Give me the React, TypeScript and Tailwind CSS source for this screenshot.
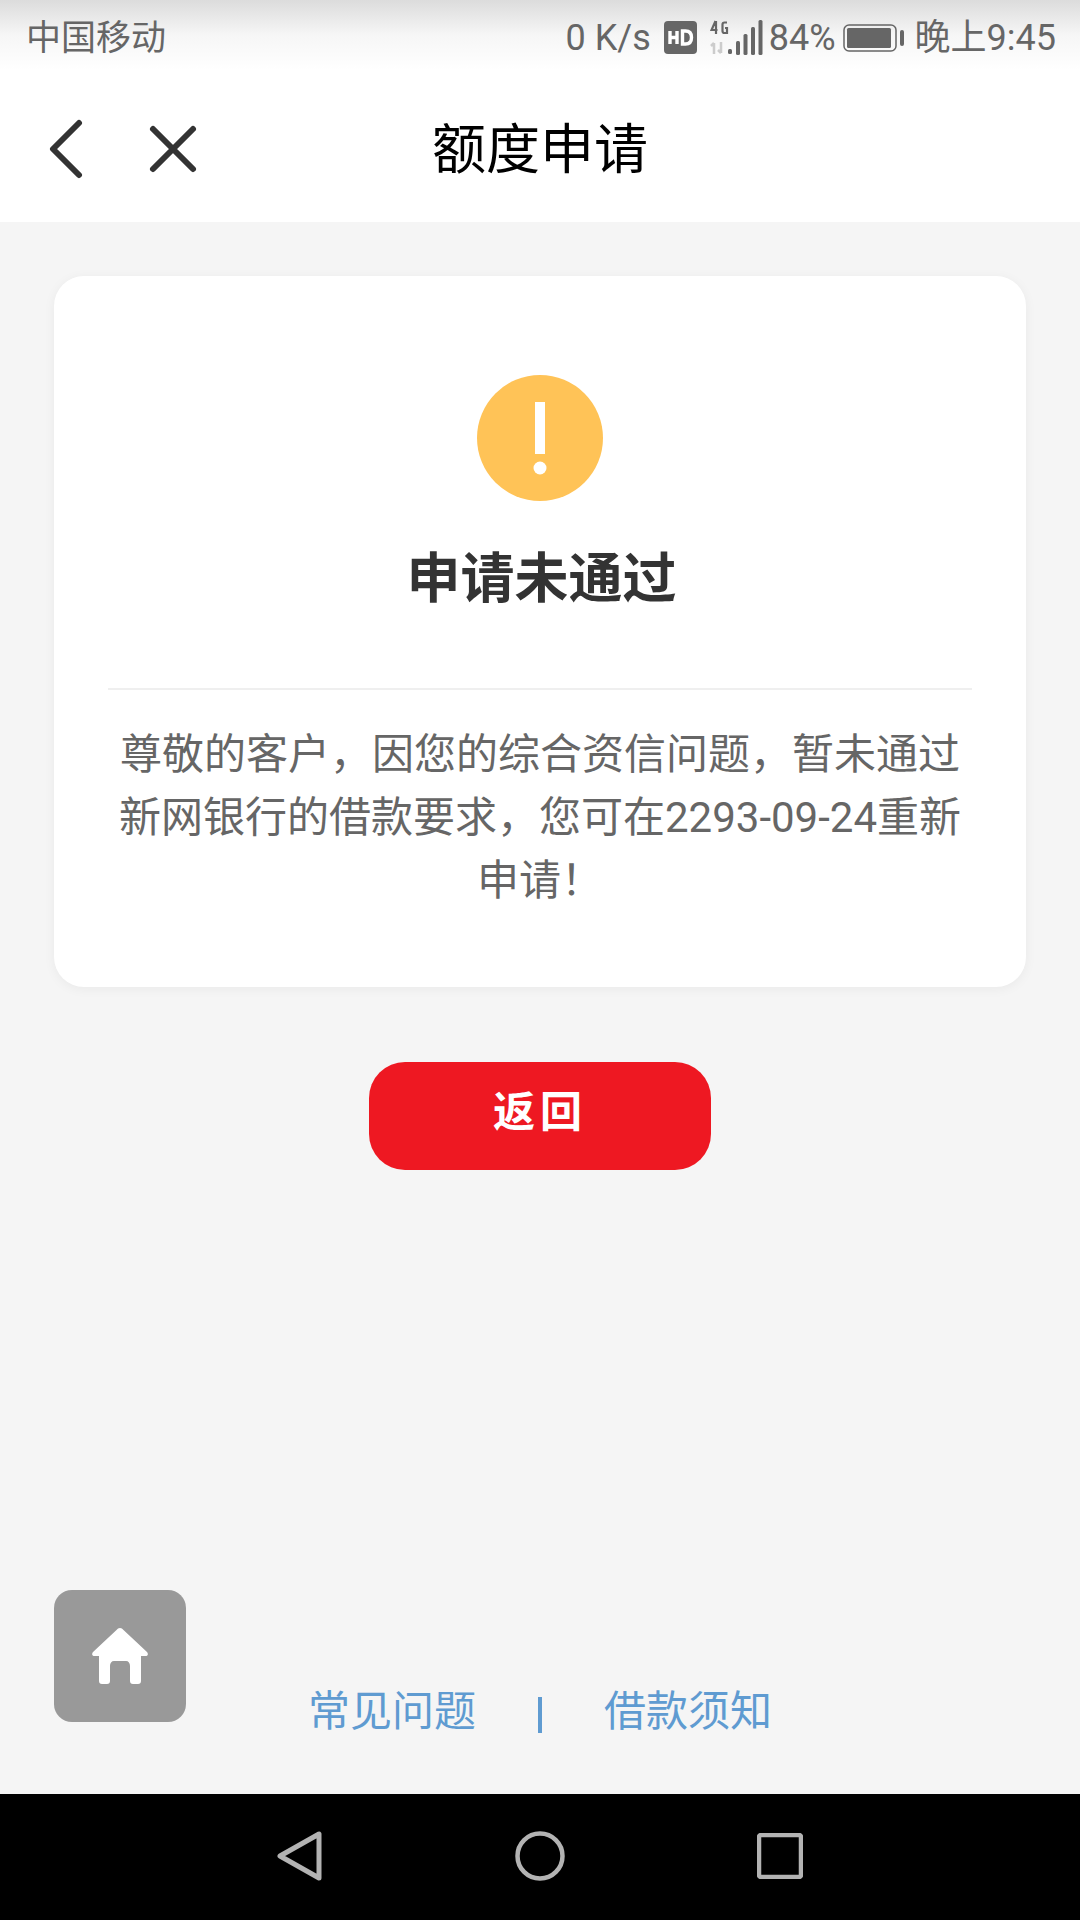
import React from "react";

const font = "font-['Roboto','Noto_Sans_CJK_SC',sans-serif]";

function StatusIcons() {
  return (
    <>
      <svg width="34" height="34" viewBox="0 0 34 34" className="ml-[13px] shrink-0">
        <rect width="33" height="33" rx="4" fill="#666" />
        <path d="M6 10v13M6 16.500h7M13 10v13" stroke="#fff" strokeWidth="3.400" fill="none" />
        <path d="M18.500 10v13h3c4.500 0 6-3 6-6.500s-1.500-6.500-6-6.500z" stroke="#fff" strokeWidth="3.400" fill="none" />
      </svg>
      <svg width="54" height="36" viewBox="0 0 54 36" className="ml-[12px] shrink-0">
        <path d="M5.500 1L1.500 10h6M6 1v13M17 2.500h-2.500c-1 0-2 1-2 2v6.500c0 1 1 2 2 2H17V8h-2" stroke="#666" strokeWidth="2.200" fill="none" />
        <path d="M4 34V23M1 26l3-3M11 22v11M8 30l3 3" stroke="#ccc" strokeWidth="2.500" fill="none" />
        <rect x="18" y="29" width="4" height="5" rx="1.500" fill="#666" />
        <rect x="26" y="21" width="4" height="14" rx="1.500" fill="#666" />
        <rect x="33.500" y="14" width="4" height="21" rx="1.500" fill="#666" />
        <rect x="41" y="7" width="4" height="28" rx="1.500" fill="#666" />
        <rect x="48.500" y="0" width="4" height="35" rx="1.500" fill="#666" />
      </svg>
      <span className="ml-[5px]">84%</span>
      <svg width="62" height="30" viewBox="0 0 62 30" className="ml-[7px] shrink-0">
        <rect x="1" y="2" width="52" height="26" rx="5" fill="none" stroke="#666" strokeWidth="1.500" />
        <rect x="4" y="5" width="44" height="20" rx="1.500" fill="#666" />
        <rect x="57" y="7" width="4" height="16" rx="2" fill="#666" />
      </svg>
      <span className="ml-[10px]">晚上9:45</span>
    </>
  );
}

export default function App() {
  return (
    <div className={`relative flex h-[1920px] w-[1080px] flex-col overflow-hidden bg-[#f5f5f5] ${font}`}>
      <div className="flex h-[70px] shrink-0 items-center justify-between bg-gradient-to-b from-[#dcdcdc] via-[#f6f6f6] to-white pl-[26px] pr-[24px] pt-[6px] text-[36px] leading-none text-[#666]">
        <span className="text-[35px]">中国移动</span>
        <div className="flex items-center">
          <span>0 K/s</span>
          <StatusIcons />
        </div>
      </div>

      <div className="relative flex h-[152px] shrink-0 items-center justify-center bg-white pt-[10px]">
        <div className="absolute left-[46px] top-[49px] flex items-center gap-[62px]">
          <svg width="40" height="60" viewBox="0 0 40 60" fill="none" stroke="#333" strokeWidth="6" strokeLinecap="round" strokeLinejoin="round">
            <path d="M33 4L7 30l26 26" />
          </svg>
          <svg width="50" height="50" viewBox="0 0 50 50" fill="none" stroke="#333" strokeWidth="6" strokeLinecap="round">
            <path d="M5 5l40 40M45 5L5 45" />
          </svg>
        </div>
        <h1 className="text-[54px] font-normal leading-none text-black">额度申请</h1>
      </div>

      <main className="flex flex-1 flex-col px-[54px] pt-[54px]">
        <section className="flex h-[711px] flex-col items-center rounded-[30px] bg-white px-[54px] pt-[99px] shadow-[0_2px_12px_rgba(0,0,0,0.05)]">
          <svg width="126" height="126" viewBox="0 0 126 126" className="shrink-0">
            <circle cx="63" cy="63" r="63" fill="#ffc357" />
            <rect x="58" y="27" width="10" height="52" fill="#fff" />
            <circle cx="63" cy="93" r="6.500" fill="#fff" />
          </svg>
          <h2 className="mt-[39px] pl-[3px] text-[54px] font-bold leading-[80px] text-[#333]">申请未通过</h2>
          <div className="mt-[68px] h-[2px] w-full shrink-0 bg-[#efefef]" />
          <p className="mt-[33px] w-[864px] text-center text-[42px] leading-[63px] text-[#666]">
            尊敬的客户，因您的综合资信问题，暂未通过新网银行的借款要求，您可在2293-09-24重新申请！
          </p>
        </section>

        <button className="mx-auto mt-[75px] flex h-[108px] w-[342px] items-center justify-center rounded-[36px] bg-[#ee1822] pb-[7px] text-[42px] font-bold tracking-[5px] text-white">
          返回
        </button>

        <nav className="mt-auto mb-[40px] flex h-[84px] items-center justify-center text-[42px] leading-none text-[#5f9bd1]">
          <span>常见问题</span>
          <span className="mx-[62px] h-[36px] w-[4px] translate-y-[3px] bg-[#5f9bd1]" />
          <span>借款须知</span>
        </nav>
      </main>

      <div className="absolute left-[54px] top-[1590px] flex h-[132px] w-[132px] items-center justify-center rounded-[18px] bg-[#999]">
        <svg width="58" height="58" viewBox="0 0 58 58" fill="#fff">
          <path d="M29 1c1.500 0 2.500.7 3.500 2L56 25c1.500 2 1 4-1.500 4H50v25c0 2-1 3-3 3h-5c-2 0-3-1-3-3V39c0-3-1.500-5-4-5H23c-2.500 0-4 2-4 5v15c0 2-1 3-3 3h-5c-2 0-3-1-3-3V29H3.500C1 29 .5 27 2 25L25.500 3C26.500 1.700 27.500 1 29 1z" />
        </svg>
      </div>

      <footer className="flex h-[126px] shrink-0 items-center justify-center gap-[192px] bg-black pb-[2px]">
        <svg width="46" height="50" viewBox="0 0 46 50" fill="none" stroke="#b3b3b3" strokeWidth="5" strokeLinejoin="round">
          <path d="M42 3v44L3 25z" />
        </svg>
        <svg width="50" height="50" viewBox="0 0 50 50" fill="none" stroke="#b3b3b3" strokeWidth="4.500">
          <circle cx="25" cy="25" r="22.500" />
        </svg>
        <svg width="46" height="46" viewBox="0 0 46 46" fill="none" stroke="#b3b3b3" strokeWidth="4.500" strokeLinejoin="round">
          <rect x="2" y="2" width="42" height="42" rx="2" />
        </svg>
      </footer>
    </div>
  );
}
